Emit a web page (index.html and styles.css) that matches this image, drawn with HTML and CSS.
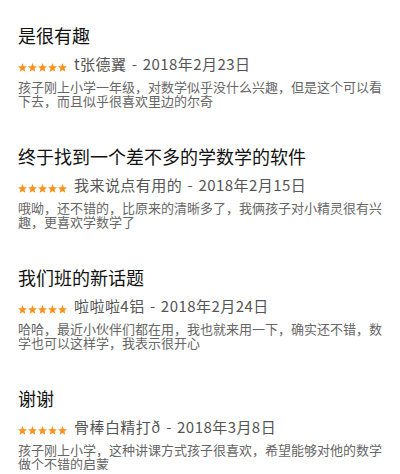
FILE: index.html
```html
<!DOCTYPE html>
<html lang="zh-CN">
  <head>
    <meta charset="UTF-8" />
    <meta name="viewport" content="width=device-width, initial-scale=1.0" />
    <title>用户评论</title>
    <link rel="stylesheet" href="styles.css">
  </head>
  <body>
    <svg class="defs" width="0" height="0" aria-hidden="true">
      <defs>
        <polygon id="star" points="4.5,0 5.75,3.2 9,3.3 6.5,5.45 7.35,8.8 4.5,6.95 1.65,8.8 2.5,5.45 0,3.3 3.25,3.2" />
      </defs>
    </svg>
    <div class="reviews">
      <div class="review">
        <h3 class="review-title">是很有趣</h3>
        <div class="review-meta">
          <svg class="stars" width="49" height="9" viewBox="0 0 49 9">
            <use href="#star" x="0" /><use href="#star" x="10" /><use href="#star" x="20" /><use href="#star" x="30" /><use href="#star" x="40" />
          </svg>
          <span class="author">t张德翼 - 2018年2月23日</span>
        </div>
        <p class="review-body">孩子刚上小学一年级，对数学似乎没什么兴趣，但是这个可以看下去，而且似乎很喜欢里边的尔奇</p>
      </div>
      <div class="review">
        <h3 class="review-title">终于找到一个差不多的学数学的软件</h3>
        <div class="review-meta">
          <svg class="stars" width="49" height="9" viewBox="0 0 49 9">
            <use href="#star" x="0" /><use href="#star" x="10" /><use href="#star" x="20" /><use href="#star" x="30" /><use href="#star" x="40" />
          </svg>
          <span class="author">我来说点有用的 - 2018年2月15日</span>
        </div>
        <p class="review-body">哦呦，还不错的，比原来的清晰多了，我俩孩子对小精灵很有兴趣，更喜欢学数学了</p>
      </div>
      <div class="review">
        <h3 class="review-title">我们班的新话题</h3>
        <div class="review-meta">
          <svg class="stars" width="49" height="9" viewBox="0 0 49 9">
            <use href="#star" x="0" /><use href="#star" x="10" /><use href="#star" x="20" /><use href="#star" x="30" /><use href="#star" x="40" />
          </svg>
          <span class="author">啦啦啦4铝 - 2018年2月24日</span>
        </div>
        <p class="review-body">哈哈，最近小伙伴们都在用，我也就来用一下，确实还不错，数学也可以这样学，我表示很开心</p>
      </div>
      <div class="review">
        <h3 class="review-title">谢谢</h3>
        <div class="review-meta">
          <svg class="stars" width="49" height="9" viewBox="0 0 49 9">
            <use href="#star" x="0" /><use href="#star" x="10" /><use href="#star" x="20" /><use href="#star" x="30" /><use href="#star" x="40" />
          </svg>
          <span class="author">骨棒白精打ð - 2018年3月8日</span>
        </div>
        <p class="review-body">孩子刚上小学，这种讲课方式孩子很喜欢，希望能够对他的数学做个不错的启蒙</p>
      </div>
    </div>
  </body>
</html>
```

FILE: styles.css
```css
body {
  font-family: "Noto Sans CJK SC", "Noto Sans", sans-serif;
  margin: 0;
  padding: 0;
  background-color: #fff;
}
.defs {
  position: absolute;
}
.reviews {
  padding: 24px 17px 0 18px;
}
.review {
  margin-bottom: 38px;
}
.review:last-child {
  margin-bottom: 0;
}
.review-title {
  margin: 0 0 9px;
  font-size: 18px;
  line-height: 22px;
  font-weight: 400;
  color: #111;
}
.review-meta {
  display: flex;
  align-items: flex-end;
  margin-bottom: 7px;
}
.stars {
  fill: #f7931e;
  margin: 0 7px 1px 0;
  flex-shrink: 0;
}
.author {
  font-size: 15px;
  line-height: 18px;
  color: #555;
  white-space: nowrap;
  word-spacing: 1.5px;
  letter-spacing: 0.45px;
}
.review-body {
  margin: 0;
  font-size: 13px;
  line-height: 13.5px;
  color: #666;
}
```
